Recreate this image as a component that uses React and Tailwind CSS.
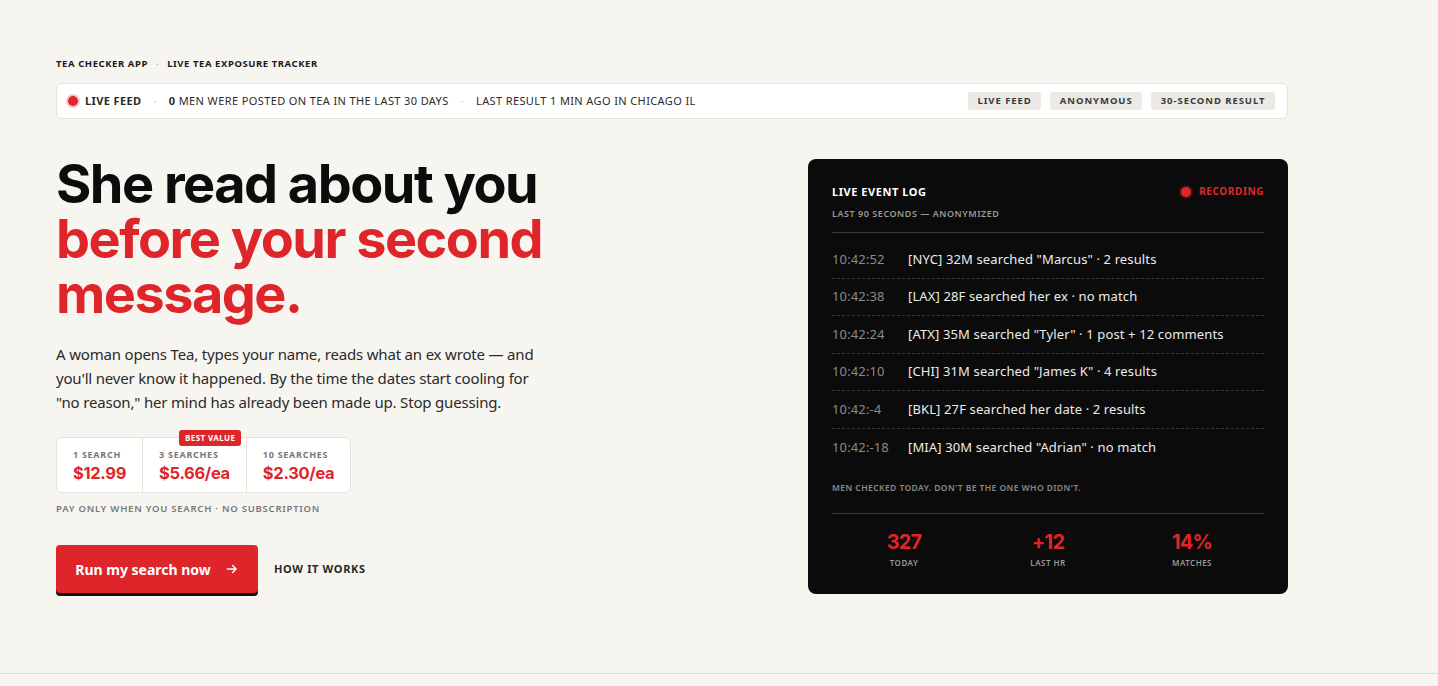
import React from 'react';

const RED = 'text-[#de2529]';

const events = [
  { t: '10:42:52', msg: '[NYC] 32M searched "Marcus" · 2 results' },
  { t: '10:42:38', msg: '[LAX] 28F searched her ex · no match' },
  { t: '10:42:24', msg: '[ATX] 35M searched "Tyler" · 1 post + 12 comments' },
  { t: '10:42:10', msg: '[CHI] 31M searched "James K" · 4 results' },
  { t: '10:42:-4', msg: '[BKL] 27F searched her date · 2 results' },
  { t: '10:42:-18', msg: '[MIA] 30M searched "Adrian" · no match' },
];

const prices = [
  { label: '1 SEARCH', price: '$12.99' },
  { label: '3 SEARCHES', price: '$5.66/ea', badge: 'BEST VALUE' },
  { label: '10 SEARCHES', price: '$2.30/ea' },
];

const stats = [
  { n: '327', l: 'TODAY' },
  { n: '+12', l: 'LAST HR' },
  { n: '14%', l: 'MATCHES' },
];

const Dot = () => (
  <span className="w-[10px] h-[10px] rounded-full bg-[#de2529] shadow-[0_0_0_2px_rgba(222,37,41,0.25)]" />
);

const LiveBar = () => (
  <div className="mt-[12px] h-[36px] bg-white border border-[#e6e3dc] rounded-[6px] flex items-center pl-[11px] pr-[12px] text-[11px] tracking-[0.035em] text-[#2a2a2a]">
    <Dot />
    <span className="ml-[7px] font-bold">LIVE FEED</span>
    <span className="mx-[12px] text-[#c9c6bf]">·</span>
    <span><b>0</b> MEN WERE POSTED ON TEA IN THE LAST 30 DAYS</span>
    <span className="mx-[12px] text-[#c9c6bf]">·</span>
    <span>LAST RESULT 1 MIN AGO IN CHICAGO IL</span>
    <div className="ml-auto flex gap-[9px]">
      {['LIVE FEED', 'ANONYMOUS', '30-SECOND RESULT'].map((t) => (
        <span key={t} className="bg-[#ebe9e3] rounded-[3px] px-[9.5px] h-[18px] flex items-center text-[9.5px] font-bold tracking-[0.1em] text-[#3a3a3a]">
          {t}
        </span>
      ))}
    </div>
  </div>
);

const Hero = () => (
  <div className="w-[560px]">
    <h1 className="font-['Inter'] font-bold text-[54px] leading-[55px] tracking-[-0.028em] text-[#0c0c0c]">
      She read about you
      <br />
      <span className={RED}>before your second message.</span>
    </h1>
    <p className="mt-[21px] w-[486px] text-[15px] leading-[24px] tracking-[-0.012em] text-[#2a2a2a]">
      A woman opens Tea, types your name, reads what an ex wrote — and you'll never know it happened. By the time the dates start cooling for "no reason," her mind has already been made up. Stop guessing.
    </p>

    <div className="mt-[23px] inline-flex bg-white border border-[#e6e3dc] rounded-[6px]">
      {prices.map((p, i) => (
        <div key={p.label} className={`relative px-[16px] pt-[10px] pb-[8px] ${i > 0 ? 'border-l border-[#e6e3dc]' : ''}`}>
          {p.badge && (
            <span className="absolute -top-[8px] left-[36px] bg-[#de2529] text-white rounded-[3px] px-[6px] h-[16px] flex items-center text-[8px] font-bold tracking-[0.05em] whitespace-nowrap">
              {p.badge}
            </span>
          )}
          <div className="text-[9px] font-bold tracking-[0.08em] text-[#777]">{p.label}</div>
          <div className={`font-['Inter'] font-bold text-[16.5px] leading-[22px] tracking-[-0.02em] ${RED}`}>{p.price}</div>
        </div>
      ))}
    </div>
    <div className="mt-[9px] text-[9.5px] font-semibold tracking-[0.08em] text-[#777]">
      PAY ONLY WHEN YOU SEARCH · NO SUBSCRIPTION
    </div>

    <div className="mt-[29px] flex items-center gap-[16px]">
      <button className="h-[48px] w-[202px] rounded-[4px] bg-[#de2529] shadow-[0_3px_0_#111] text-white text-[14px] font-bold flex items-center justify-center gap-[14px]">
        Run my search now
        <svg width="14" height="14" viewBox="0 0 24 24" fill="none" stroke="currentColor" strokeWidth="2.4" strokeLinecap="round" strokeLinejoin="round">
          <path d="M4 12h15M13 6l6 6-6 6" />
        </svg>
      </button>
      <span className="text-[11px] font-bold tracking-[0.06em] text-[#2a2a2a]">HOW IT WORKS</span>
    </div>
  </div>
);

const EventLog = () => (
  <div className="w-[480px] bg-[#0b0b0b] rounded-[8px] px-[24px] pt-[25px] pb-[25px] text-white">
    <div className="flex justify-between items-start">
      <div>
        <div className="text-[11px] font-bold tracking-[0.05em]">LIVE EVENT LOG</div>
        <div className="mt-[6px] text-[9px] font-semibold tracking-[0.06em] text-[#9a9a9a]">LAST 90 SECONDS — ANONYMIZED</div>
      </div>
      <div className="flex items-center gap-[8px] text-[10px] font-bold tracking-[0.06em] text-[#e0262b]">
        <Dot />
        RECORDING
      </div>
    </div>
    <div className="mt-[12px] border-t border-[#3a3a3a]" />
    <div className="mt-[8px]">
      {events.map((e, i) => (
        <div key={e.t} className={`h-[37.5px] flex items-center text-[13px] tracking-[0.01em] ${i < events.length - 1 ? 'border-b border-dashed border-[#3a3a3a]' : ''}`}>
          <span className="w-[76px] text-[#8a8a8a]">{e.t}</span>
          <span className="text-[#ececec]">{e.msg}</span>
        </div>
      ))}
    </div>
    <div className="mt-[16px] text-[8.5px] font-semibold tracking-[0.05em] text-[#8a8a8a]">
      MEN CHECKED TODAY. DON'T BE THE ONE WHO DIDN'T.
    </div>
    <div className="mt-[18px] border-t border-[#3a3a3a] grid grid-cols-3 pt-[16px]">
      {stats.map((s) => (
        <div key={s.l} className="flex flex-col items-center">
          <div className={`font-['Inter'] font-bold text-[20px] leading-[24px] tracking-[-0.04em] ${RED}`}>{s.n}</div>
          <div className="mt-[3px] text-[8px] font-semibold tracking-[0.06em] text-[#9a9a9a]">{s.l}</div>
        </div>
      ))}
    </div>
  </div>
);

export default function App() {
  return (
    <div className="min-h-[686px] bg-[#f7f5f0] font-['Noto_Sans',sans-serif] flex flex-col">
      <div className="w-[1232px] ml-[56px] pt-[57px]">
        <div className="flex items-center text-[9.5px] font-bold tracking-[0.06em] text-[#1a1a1a]">
          <span>TEA CHECKER APP</span>
          <span className="mx-[8px] text-[#bbb]">·</span>
          <span>LIVE TEA EXPOSURE TRACKER</span>
        </div>
        <LiveBar />
        <div className="mt-[40px] flex justify-between items-start">
          <div className="-mt-[3px]">
            <Hero />
          </div>
          <EventLog />
        </div>
      </div>
      <div className="mt-auto mb-[12px] border-t border-[#dcd9d2]" />
    </div>
  );
}
